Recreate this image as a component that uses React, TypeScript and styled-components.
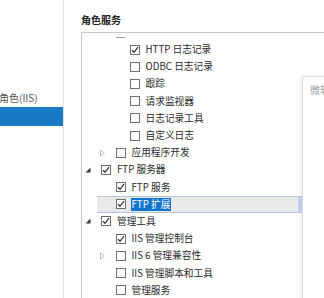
import React from 'react'
import styled, { createGlobalStyle } from 'styled-components'

const GlobalStyle = createGlobalStyle`
  html, body {
    margin: 0;
    padding: 0;
    background: #fff;
  }
  body {
    font-family: "Noto Sans CJK SC", "Noto Sans", "Liberation Sans", sans-serif;
    color: #2b2b2b;
  }
`

const Page = styled.div`
  display: flex;
  width: 324px;
  height: 298px;
  overflow: hidden;
  position: relative;
  background: #fff;
`

const Nav = styled.div`
  width: 64px;
  flex-shrink: 0;
  border-right: 1px solid #e4e4e4;
  display: flex;
  flex-direction: column;
  padding-top: 89px;
  box-sizing: border-box;
`

const NavItem = styled.div<{ $active?: boolean }>`
  height: ${({ $active }) => ($active ? '19px' : '17px')};
  line-height: 17px;
  font-size: 10px;
  white-space: nowrap;
  overflow: hidden;
  margin-left: -1px;
  color: ${({ $active }) => ($active ? '#fff' : '#555')};
  background: ${({ $active }) => ($active ? '#1a7ac8' : 'transparent')};
  margin-top: ${({ $active }) => ($active ? '1px' : '0')};
`

const Main = styled.div`
  flex: 1;
  display: flex;
  flex-direction: column;
  padding: 12px 0 0 17px;
  min-width: 0;
`

const Title = styled.div`
  font-size: 10px;
  font-weight: bold;
  color: #222;
  height: 20px;
  line-height: 16px;
`

const ListBox = styled.div`
  flex: 1;
  border-top: 1px solid #c9c9c9;
  border-left: 1px solid #c9c9c9;
  overflow: hidden;
  padding-top: 4px;
  margin-right: -20px;
`

const ClippedBox = styled.div`
  width: 9px;
  height: 1px;
  background: #9a9a9a;
  margin-left: 34px;
  margin-bottom: 3px;
`

const Row = styled.div`
  height: 17.2px;
  display: flex;
  align-items: center;
`

const RowInner = styled.div<{ $level: number; $selected?: boolean }>`
  height: 100%;
  margin-left: ${({ $level }) => $level * 14.5}px;
  padding-left: 3px;
  display: flex;
  align-items: center;
  box-sizing: border-box;
  ${({ $selected }) =>
    $selected
      ? `
    width: 205px;
    background: #e9e9e9;
    border-top: 1px solid #b3c6da;
    border-bottom: 1px solid #b3c6da;
    border-right: 4px solid #c6cff8;
  `
      : ''}
`

const Expander = styled.span`
  width: 16px;
  height: 10px;
  flex-shrink: 0;
  display: flex;
  align-items: center;
`

const Box = styled.span`
  width: 10px;
  height: 10px;
  box-sizing: border-box;
  border: 1px solid #6f6f6f;
  background: #fff;
  flex-shrink: 0;
  display: flex;
  align-items: center;
  justify-content: center;
`

const Label = styled.span<{ $highlight?: boolean }>`
  font-size: 9.7px;
  line-height: 13px;
  white-space: nowrap;
  padding: 0 ${({ $highlight }) => ($highlight ? '1px' : '0')};
  margin-left: ${({ $highlight }) => ($highlight ? '5px' : '6px')};
  color: ${({ $highlight }) => ($highlight ? '#fff' : '#2b2b2b')};
  background: ${({ $highlight }) => ($highlight ? '#1273cf' : 'transparent')};
`

const SidePanel = styled.div`
  position: absolute;
  left: 302px;
  top: 76px;
  width: 60px;
  bottom: -10px;
  background: #fff;
  border: 1px solid #dcdcdc;
  box-shadow: -1px 0 3px rgba(0, 0, 0, 0.08);
  padding: 5px 0 0 7px;
  box-sizing: border-box;
`

const PanelText = styled.div`
  font-size: 10px;
  color: #a0a0a0;
  white-space: nowrap;
`

const Check = () => (
  <svg width="8" height="8" viewBox="0 0 8 8">
    <path d="M1 4.2 L3 6.3 L7 1.2" fill="none" stroke="#333" strokeWidth="1.3" />
  </svg>
)

const Collapsed = () => (
  <svg width="5" height="8" viewBox="0 0 5 8">
    <path d="M0.5 0.8 L4.3 4 L0.5 7.2 Z" fill="none" stroke="#b5b5b5" strokeWidth="0.9" />
  </svg>
)

const Opened = () => (
  <svg width="6" height="6" viewBox="0 0 6 6">
    <path d="M5.5 0.5 L5.5 5.5 L0.5 5.5 Z" fill="#3a3a3a" />
  </svg>
)

type Item = {
  label: string
  level: number
  checked?: boolean
  expander?: 'open' | 'closed'
  selected?: boolean
}

// level 1.97: 第三层（叶子项，缩进略小于两级）
const items: Item[] = [
  { label: 'HTTP 日志记录', level: 1.97, checked: true },
  { label: 'ODBC 日志记录', level: 1.97 },
  { label: '跟踪', level: 1.97 },
  { label: '请求监视器', level: 1.97 },
  { label: '日志记录工具', level: 1.97 },
  { label: '自定义日志', level: 1.97 },
  { label: '应用程序开发', level: 1, expander: 'closed' },
  { label: 'FTP 服务器', level: 0, checked: true, expander: 'open' },
  { label: 'FTP 服务', level: 1, checked: true },
  { label: 'FTP 扩展', level: 1, checked: true, selected: true },
  { label: '管理工具', level: 0, checked: true, expander: 'open' },
  { label: 'IIS 管理控制台', level: 1, checked: true },
  { label: 'IIS 6 管理兼容性', level: 1, expander: 'closed' },
  { label: 'IIS 管理脚本和工具', level: 1 },
  { label: '管理服务', level: 1 },
]

export default function App() {
  return (
    <Page>
      <GlobalStyle />
      <Nav>
        <NavItem>角色(IIS)</NavItem>
        <NavItem $active />
      </Nav>
      <Main>
        <Title>角色服务</Title>
        <ListBox>
          <ClippedBox />
          {items.map((it) => (
            <Row key={it.label}>
              <RowInner $level={it.level} $selected={it.selected}>
                <Expander>
                  {it.expander === 'open' && <Opened />}
                  {it.expander === 'closed' && <Collapsed />}
                </Expander>
                <Box>{it.checked && <Check />}</Box>
                <Label $highlight={it.selected}>{it.label}</Label>
              </RowInner>
            </Row>
          ))}
        </ListBox>
      </Main>
      <SidePanel>
        <PanelText>微软</PanelText>
      </SidePanel>
    </Page>
  )
}
